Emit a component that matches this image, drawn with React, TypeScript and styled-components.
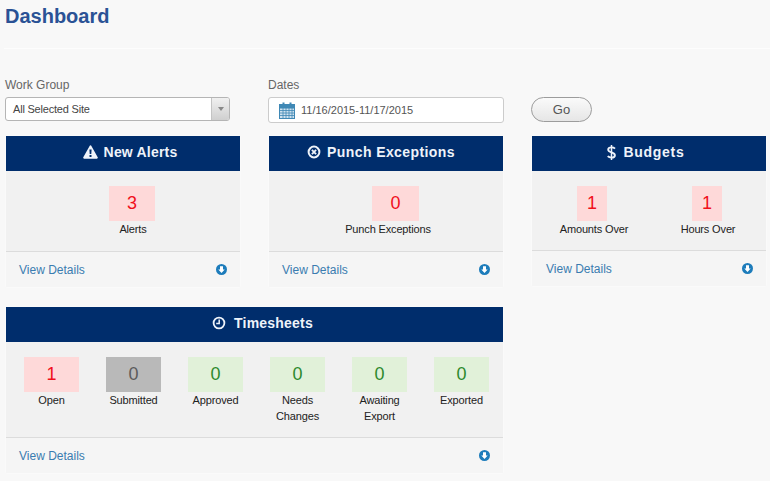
import React from "react";
import styled, { createGlobalStyle } from "styled-components";

const GlobalStyle = createGlobalStyle`
  html, body {
    margin: 0;
    padding: 0;
    background: #f8f8f8;
    font-family: "Liberation Sans", Arial, sans-serif;
    overflow: hidden;
  }
`;

type Tone = "red" | "grey" | "green";

const tones = {
  red: { bg: "#fed9d9", fg: "#f0101c" },
  grey: { bg: "#b9b9b9", fg: "#5c5c5c" },
  green: { bg: "#e1f1d9", fg: "#2e8a2e" },
};

function AlertIcon() {
  return (
    <svg width="15" height="14" viewBox="0 0 15 14">
      <path
        fillRule="evenodd"
        fill="#eef3fa"
        d="M7.5 0.3c.4 0 .7.2.9.6l6.3 11.4c.4.7 0 1.4-.8 1.4H1.1c-.8 0-1.2-.7-.8-1.4L6.6.9c.2-.4.5-.6.9-.6zM6.4 4.4l.3 4.6h1.6l.3-4.6zM6.5 10v1.9h2V10z"
      />
    </svg>
  );
}

function RemoveIcon() {
  return (
    <svg width="14" height="14" viewBox="0 0 14 14">
      <circle cx="7" cy="7" r="5.4" fill="none" stroke="#eef3fa" strokeWidth="2" />
      <path d="M4.9 4.9l4.2 4.2M9.1 4.9L4.9 9.1" stroke="#eef3fa" strokeWidth="1.8" />
    </svg>
  );
}

function DollarIcon() {
  return (
    <svg width="9" height="15" viewBox="0 0 9 15">
      <path
        fill="none"
        stroke="#eef3fa"
        strokeWidth="1.9"
        d="M8 3.6C7.2 2.8 6 2.4 4.6 2.4 2.6 2.4 1.2 3.3 1.2 4.7c0 3.2 6.7 2.1 6.7 5.5 0 1.5-1.5 2.4-3.4 2.4-1.5 0-2.9-.5-3.8-1.4"
      />
      <path d="M4.5 0v15" stroke="#eef3fa" strokeWidth="1.5" />
    </svg>
  );
}

function ClockIcon() {
  return (
    <svg width="14" height="14" viewBox="0 0 14 14">
      <circle cx="7" cy="7" r="5.4" fill="none" stroke="#eef3fa" strokeWidth="1.8" />
      <path d="M7.2 3.6V7.4H4.2" fill="none" stroke="#eef3fa" strokeWidth="1.5" />
    </svg>
  );
}

function ArrowDownIcon() {
  return (
    <svg width="11" height="11" viewBox="0 0 11 11">
      <circle cx="5.5" cy="5.5" r="5.5" fill="#1d7cbb" />
      <path d="M5.5 8.9L2.3 5.5H4V2.3H7V5.5H8.7z" fill="#fff" />
    </svg>
  );
}

function CalendarIcon() {
  return (
    <svg width="16" height="17" viewBox="0 0 16 17">
      <rect x="0.5" y="2.5" width="15" height="14" fill="#cfe2ef" stroke="#3f88b5" />
      <rect x="0.5" y="2.5" width="15" height="3.5" fill="#3f88b5" stroke="#3f88b5" />
      <path
        d="M1 8.5h14M1 11h14M1 13.5h14M4 6v10M7 6v10M10 6v10M13 6v10"
        stroke="#3f88b5"
        strokeWidth="0.8"
      />
      <path d="M4.5 0.5v3.5M11.5 0.5v3.5" stroke="#3f88b5" strokeWidth="2" />
    </svg>
  );
}

function Stat({
  value,
  label,
  tone,
  tileWidth,
  shift = 0,
}: {
  value: number;
  label: React.ReactNode;
  tone: Tone;
  tileWidth: number;
  shift?: number;
}) {
  return (
    <StatCol>
      <Tile $tone={tone} $width={tileWidth} $shift={shift}>
        {value}
      </Tile>
      <StatLabel>{label}</StatLabel>
    </StatCol>
  );
}

function Footer({ inset = 13 }: { inset?: number }) {
  return (
    <CardFooter $inset={inset}>
      <DetailsLink href="#">View Details</DetailsLink>
      <ArrowDownIcon />
    </CardFooter>
  );
}

export default function App() {
  return (
    <Page>
      <GlobalStyle />
      <Title>Dashboard</Title>
      <Divider />

      <Filters>
        <WorkGroupField>
          <FieldLabel>Work Group</FieldLabel>
          <SelectBox>
            <SelectText>All Selected Site</SelectText>
            <SelectArrow>
              <Caret />
            </SelectArrow>
          </SelectBox>
        </WorkGroupField>
        <DatesField>
          <FieldLabel>Dates</FieldLabel>
          <DateBox>
            <CalendarIcon />
            <DateText>11/16/2015-11/17/2015</DateText>
          </DateBox>
        </DatesField>
        <GoButton>Go</GoButton>
      </Filters>

      <CardGrid>
        <Card>
          <CardHeader $gap={6} $nudge={7} $tracking={0.2}>
            <AlertIcon />
            New Alerts
          </CardHeader>
          <CardBody $height={81}>
            <StatsRow $offset={20}>
              <Stat value={3} label="Alerts" tone="red" tileWidth={46} shift={-1} />
            </StatsRow>
          </CardBody>
          <Footer />
        </Card>

        <Card>
          <CardHeader $gap={6} $nudge={-5} $tracking={0.4}>
            <RemoveIcon />
            Punch Exceptions
          </CardHeader>
          <CardBody $height={81}>
            <StatsRow $offset={4}>
              <Stat value={0} label="Punch Exceptions" tone="red" tileWidth={47} shift={7.5} />
            </StatsRow>
          </CardBody>
          <Footer />
        </Card>

        <Card>
          <CardHeader $gap={8} $nudge={-3.5} $tracking={0.7}>
            <DollarIcon />
            Budgets
          </CardHeader>
          <CardBody $height={80}>
            <BudgetRow>
              <Stat value={1} label="Amounts Over" tone="red" tileWidth={30} shift={-2} />
              <Stat value={1} label="Hours Over" tone="red" tileWidth={30} shift={-1} />
            </BudgetRow>
          </CardBody>
          <Footer inset={14} />
        </Card>

        <WideCard>
          <CardHeader $gap={8} $nudge={8} $tracking={0.2}>
            <ClockIcon />
            Timesheets
          </CardHeader>
          <CardBody $height={96}>
            <TimesheetRow>
              <Stat value={1} label="Open" tone="red" tileWidth={55} />
              <Stat value={0} label="Submitted" tone="grey" tileWidth={55} />
              <Stat value={0} label="Approved" tone="green" tileWidth={55} />
              <Stat value={0} label={<>Needs<br />Changes</>} tone="green" tileWidth={55} />
              <Stat value={0} label={<>Awaiting<br />Export</>} tone="green" tileWidth={55} />
              <Stat value={0} label="Exported" tone="green" tileWidth={55} />
            </TimesheetRow>
          </CardBody>
          <Footer />
        </WideCard>
      </CardGrid>
    </Page>
  );
}

const Page = styled.div`
  width: 770px;
  height: 481px;
  box-sizing: border-box;
  overflow: hidden;
`;

const Title = styled.h1`
  margin: 0;
  padding: 6px 0 0 5px;
  height: 48px;
  box-sizing: border-box;
  font-size: 20px;
  line-height: 21px;
  font-weight: bold;
  color: #2a5295;
`;

const Divider = styled.div`
  height: 1px;
  margin-left: 4px;
  background: #fdfdfd;
`;

const Filters = styled.div`
  display: flex;
  align-items: flex-end;
  padding: 29px 0 0 5px;
  height: 74px;
  box-sizing: border-box;
`;

const WorkGroupField = styled.div`
  width: 225px;
  margin: 0 38px 2px 0;
`;

const DatesField = styled.div`
  width: 236px;
  margin-right: 27px;
`;

const FieldLabel = styled.div`
  font-size: 12px;
  line-height: 14px;
  margin-bottom: 5px;
  color: #666;
`;

const SelectBox = styled.div`
  display: flex;
  height: 24px;
  box-sizing: border-box;
  border: 1px solid #b5b5b5;
  border-radius: 3px;
  background: #fff;
  overflow: hidden;
`;

const SelectText = styled.div`
  flex: 1;
  padding-left: 7px;
  font-size: 11px;
  line-height: 22px;
  letter-spacing: -0.2px;
  color: #444;
`;

const SelectArrow = styled.div`
  width: 17px;
  display: flex;
  align-items: center;
  justify-content: center;
  border-left: 1px solid #c4c4c4;
  background: linear-gradient(#f0f0f0, #cfcfcf);
`;

const Caret = styled.span`
  width: 0;
  height: 0;
  border-left: 3px solid transparent;
  border-right: 3px solid transparent;
  border-top: 4px solid #888;
`;

const DateBox = styled.div`
  display: flex;
  align-items: center;
  gap: 6px;
  height: 26px;
  box-sizing: border-box;
  padding-left: 10px;
  border: 1px solid #ccc;
  border-radius: 3px;
  background: #fff;
`;

const DateText = styled.span`
  font-size: 11px;
  color: #555;
`;

const GoButton = styled.button`
  width: 61px;
  height: 25px;
  margin-bottom: 1px;
  padding: 0;
  border: 1px solid #9c9c9c;
  border-radius: 13px;
  background: linear-gradient(#fafafa, #e6e6e6);
  font-family: inherit;
  font-size: 13px;
  color: #555;
`;

const CardGrid = styled.div`
  display: grid;
  grid-template-columns: repeat(3, 234px);
  column-gap: 29px;
  row-gap: 20px;
  align-items: start;
  padding: 13px 0 0 6px;
`;

const Card = styled.section`
  background: #f3f3f3;
  box-shadow: 0 0 2px #fff;
`;

const WideCard = styled(Card)`
  grid-column: span 2;
`;

const CardHeader = styled.h2<{ $gap: number; $nudge: number; $tracking: number }>`
  display: flex;
  align-items: center;
  justify-content: center;
  gap: ${(p) => p.$gap}px;
  height: 35px;
  margin: 0;
  box-sizing: border-box;
  padding-bottom: 3px;
  padding-left: ${(p) => Math.max(p.$nudge, 0) * 2}px;
  padding-right: ${(p) => Math.max(-p.$nudge, 0) * 2}px;
  background: #002d6c;
  color: #eef3fa;
  font-size: 14px;
  font-weight: bold;
  letter-spacing: ${(p) => p.$tracking}px;
`;

const CardBody = styled.div<{ $height: number }>`
  height: ${(p) => p.$height}px;
  box-sizing: border-box;
  padding-top: 15px;
  background: #f1f1f1;
  border-bottom: 1px solid #dcdcdc;
`;

const StatsRow = styled.div<{ $offset: number }>`
  display: flex;
  justify-content: center;
  padding-left: ${(p) => p.$offset}px;
`;

const BudgetRow = styled.div`
  display: grid;
  grid-template-columns: repeat(2, 114px);
  padding-left: 5px;
`;

const TimesheetRow = styled.div`
  display: grid;
  grid-template-columns: repeat(6, 82px);
  padding-left: 4.5px;
`;

const StatCol = styled.div`
  display: flex;
  flex-direction: column;
  align-items: center;
`;

const Tile = styled.div<{ $tone: Tone; $width: number; $shift: number }>`
  width: ${(p) => p.$width}px;
  height: 35px;
  margin-left: ${(p) => Math.max(p.$shift, 0) * 2}px;
  margin-right: ${(p) => Math.max(-p.$shift, 0) * 2}px;
  line-height: 35px;
  text-align: center;
  font-size: 18px;
  background: ${(p) => tones[p.$tone].bg};
  color: ${(p) => tones[p.$tone].fg};
`;

const StatLabel = styled.div`
  margin-top: 0;
  font-size: 11px;
  line-height: 16px;
  letter-spacing: -0.15px;
  text-align: center;
  color: #222;
`;

const CardFooter = styled.div<{ $inset: number }>`
  display: flex;
  align-items: center;
  justify-content: space-between;
  height: 35px;
  padding: 0 13px 0 ${(p) => p.$inset}px;
  box-sizing: border-box;
  background: #f5f5f5;
`;

const DetailsLink = styled.a`
  font-size: 12px;
  color: #3a7cb0;
  text-decoration: none;
`;
